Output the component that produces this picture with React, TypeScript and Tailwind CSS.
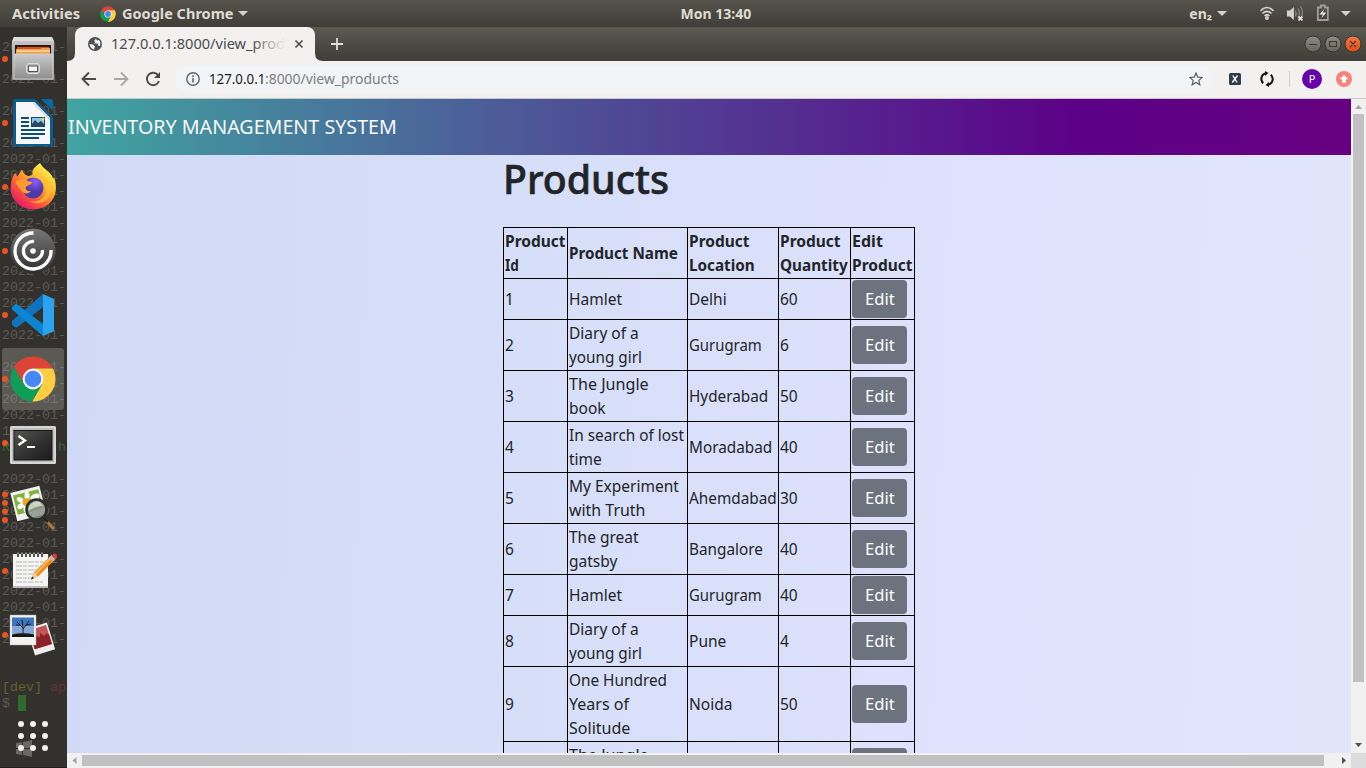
import { useLayoutEffect, useRef, useState } from "react";
import type { ReactNode } from "react";

/* Text set to an exact advance width. */
function Fit({ w, children, className = "" }: { w: number; children: ReactNode; className?: string }) {
  const ref = useRef<HTMLSpanElement>(null);
  const [scale, setScale] = useState(1);
  useLayoutEffect(() => {
    if (ref.current) setScale(w / ref.current.offsetWidth);
  }, [w]);
  return (
    <span className={"block whitespace-nowrap " + className} style={{ width: w }}>
      <span ref={ref} className="inline-block origin-left" style={{ transform: `scaleX(${scale})` }}>
        {children}
      </span>
    </span>
  );
}

type Line = [string, number];
type Row = { id: string; name: Line[]; place: Line; qty: string };

const rows: Row[] = [
  { id: "1", name: [["Hamlet", 53]], place: ["Delhi", 38], qty: "60" },
  { id: "2", name: [["Diary of a", 70], ["young girl", 73]], place: ["Gurugram", 73], qty: "6" },
  { id: "3", name: [["The Jungle", 80], ["book", 37]], place: ["Hyderabad", 79], qty: "50" },
  { id: "4", name: [["In search of lost", 115], ["time", 33]], place: ["Moradabad", 83], qty: "40" },
  { id: "5", name: [["My Experiment", 110], ["with Truth", 76]], place: ["Ahemdabad", 88], qty: "30" },
  { id: "6", name: [["The great", 70], ["gatsby", 48]], place: ["Bangalore", 74], qty: "40" },
  { id: "7", name: [["Hamlet", 53]], place: ["Gurugram", 73], qty: "40" },
  { id: "8", name: [["Diary of a", 70], ["young girl", 73]], place: ["Pune", 37], qty: "4" },
  { id: "9", name: [["One Hundred", 98], ["Years of", 60], ["Solitude", 61]], place: ["Noida", 43], qty: "50" },
  { id: "10", name: [["The Jungle", 80], ["book", 37]], place: ["Delhi", 38], qty: "30" },
];

const heads: Line[][] = [
  [["Product", 61], ["Id", 14]],
  [["Product Name", 109]],
  [["Product", 61], ["Location", 66]],
  [["Product", 61], ["Quantity", 68]],
  [["Edit", 31], ["Product", 61]],
];

const logLines = [
  47, 79, 111, 143, 159, 175, 191, 207, 223, 239, 271, 287, 303, 335, 367, 383, 399, 415, 479, 495, 511, 527, 543, 559,
  575, 591, 607, 623, 639,
];

function ChromeMark() {
  return (
    <g>
      <path d="M-19.04-11.98L-9.09 5.25L0-10.5H19.9A22.5 22.5 0 0 0-19.04-11.98Z" fill="#dd4337" />
      <path d="M19.9-10.5H0L9.09 5.25L-.86 22.48A22.5 22.5 0 0 0 19.9-10.5Z" fill="#ffcd41" />
      <path d="M-.86 22.48L9.09 5.25L-9.09 5.25L-19.04-11.98A22.5 22.5 0 0 0-.86 22.48Z" fill="#109d58" />
      <circle r="10.4" fill="#f3f3f3" />
      <circle r="8.3" fill="#4587f4" />
    </g>
  );
}

const dockIcons: ReactNode[] = [
  <g key="files">
    <defs>
      <linearGradient id="cab" x2="0" y2="1">
        <stop stopColor="#c9c9c9" />
        <stop offset="1" stopColor="#8d8d8d" />
      </linearGradient>
    </defs>
    <path d="M14 10H52L54 14V53H12V14Z" fill="url(#cab)" />
    <path d="M14 10H52L53.500 14H12.500Z" fill="#dedede" />
    <rect x="15" y="18" width="36" height="9" fill="#2b1a12" />
    <path d="M17 20H49V27H17Z" fill="#d8521c" />
    <path d="M16 22H40L42 21H50V27H16Z" fill="#f0a04a" />
    <path d="M17 24H50" stroke="#fff1d8" strokeWidth="1" />
    <rect x="14" y="27" width="39" height="25" fill="url(#cab)" stroke="#d5d5d5" strokeWidth=".8" />
    <rect x="26.500" y="36.500" width="13" height="10" rx="2.500" fill="#b9b9b9" stroke="#dcdcdc" />
    <rect x="28.500" y="39" width="9" height="5.500" fill="#f5f5f5" stroke="#555" />
  </g>,
  <g key="writer">
    <path d="M15 8H35L53 26V53Q53 55.500 50.500 55.500H15.500Q13 55.500 13 53V10Q13 8 15 8Z" fill="#0c5c92" />
    <path d="M41 8H51.500Q53 8 53 10V20Z" fill="#0369a3" />
    <path d="M16 11H34.500L50 27V53H16Z" fill="#f7f7f7" />
    <path d="M34.500 11L50 27V30L32 11Z" fill="#d5d5d5" />
    <path d="M21 27H29M21 31H29M21 35H29M21 39H45M21 43H45M21 47H39" stroke="#0c4c78" strokeWidth="1.800" />
    <rect x="31.500" y="26.500" width="13" height="9" fill="#8ec5e8" stroke="#0c4c78" />
    <path d="M32 35V33L35 29L38 32L41 30L44 33V35Z" fill="#27495c" />
    <circle cx="43" cy="28" r="1.500" fill="#f4d34e" />
  </g>,
  <g key="firefox">
    <defs>
      <linearGradient id="fox" x1=".85" y1=".1" x2=".2" y2=".95">
        <stop stopColor="#fff44f" />
        <stop offset=".35" stopColor="#ffb52b" />
        <stop offset=".65" stopColor="#ff5e36" />
        <stop offset="1" stopColor="#e5156c" />
      </linearGradient>
      <radialGradient id="globe" cx=".6" cy=".2">
        <stop stopColor="#9059ff" />
        <stop offset="1" stopColor="#4b3aa8" />
      </radialGradient>
    </defs>
    <path
      d="M40 8C43 14 50 16 53 23C54 25 54 23 54 22C60 38 52 54 33 54.500C18 54 9 42 11 30C11 24 14 20 15 18C16 19 17 21 17 22L22 14.500C23 18 25 20 28 21C31 21 33 20 32.500 18C32 14 36 11 40 8Z"
      fill="url(#fox)"
    />
    <circle cx="33" cy="33" r="10.500" fill="url(#globe)" />
    <path d="M15 27C19 23 25 24 28 26L32 27C32 30 28 30 27 31C24 33 27 37 31 36C28 40 23 39 20 34Z" fill="#ff9a30" />
    <path d="M38 22C43 24 46 28 46 34C46 43 39 48 30 46C43 53 54 42 50 30C48 24 43 21 38 22Z" fill="#ffbd36" opacity=".75" />
  </g>,
  <g key="spiral">
    <defs>
      <linearGradient id="disc" x2="0" y2="1">
        <stop stopColor="#777" />
        <stop offset="1" stopColor="#2d2d2d" />
      </linearGradient>
    </defs>
    <circle cx="33" cy="32" r="22.500" fill="url(#disc)" />
    <circle cx="33" cy="32" r="2.800" fill="#fff" />
    <path d="M33.500 14A18 18 0 1 0 51 31" fill="none" stroke="#fff" strokeWidth="3.300" />
    <path d="M34 22.500A9.500 9.500 0 1 0 42.400 31" fill="none" stroke="#fff" strokeWidth="3.300" />
  </g>,
  <g key="code">
    <path d="M12 38L43 11V24L17 44.500Q15 45 12 41.500Q11.500 40 12 38Z" fill="#0f74bd" />
    <path d="M12 24.500L16 20.500L43 41V53L12.500 27Q11.500 26 12 24.500Z" fill="#0b86d3" />
    <path d="M43 11L54 16V48L43 53Z" fill="#2ba3ef" />
  </g>,
  <g key="chrome" transform="translate(33 32)">
    <ChromeMark />
  </g>,
  <g key="terminal">
    <defs>
      <linearGradient id="scr" x2="1" y2="1">
        <stop stopColor="#555753" />
        <stop offset=".5" stopColor="#343434" />
        <stop offset="1" stopColor="#1b1b1b" />
      </linearGradient>
    </defs>
    <rect x="10" y="15" width="46" height="38" rx="1.500" fill="#d6d6d6" />
    <rect x="12" y="17" width="42" height="34" fill="#bcbcbc" />
    <rect x="14" y="19.500" width="38" height="29.500" fill="url(#scr)" stroke="#161616" />
    <path d="M18.500 25L25 29.500L18.500 34" fill="none" stroke="#fff" strokeWidth="2.300" />
    <path d="M27 36H35" stroke="#fff" strokeWidth="2" />
  </g>,
  <g key="viewer">
    <g transform="rotate(-14 28 27)">
      <rect x="13" y="14" width="30" height="29" fill="#f1f1ef" />
      <rect x="15" y="17" width="26" height="20" fill="#82b33a" />
    </g>
    <g fill="#fff">
      <ellipse cx="27" cy="21" rx="2.500" ry="4.500" />
      <ellipse cx="20.500" cy="25" rx="4" ry="2.500" transform="rotate(25 20.500 25)" />
      <ellipse cx="21" cy="31" rx="4" ry="2.500" transform="rotate(-30 21 31)" />
      <ellipse cx="26" cy="34" rx="2.500" ry="4" />
      <ellipse cx="35" cy="22" rx="5" ry="3" transform="rotate(-25 35 22)" />
      <ellipse cx="37" cy="27" rx="4" ry="3" />
    </g>
    <circle cx="26.500" cy="27" r="4" fill="#e4a828" />
    <path d="M46.500 46L53 53" stroke="#a97836" strokeWidth="3.200" strokeLinecap="round" />
    <path d="M44 43L48 47" stroke="#222" strokeWidth="2.500" />
    <circle cx="36.500" cy="34.500" r="10" fill="#8b9088" fillOpacity=".85" stroke="#292e28" strokeWidth="2.600" />
    <path d="M28.500 36A8.500 8.500 0 0 1 40 27L43 31Q35 31 28.500 36Z" fill="#fff" opacity=".55" />
  </g>,
  <g key="notes">
    <rect x="13" y="15" width="35" height="34" fill="#f4f4f2" />
    <path d="M13 48H48" stroke="#bbb" strokeWidth="2" />
    <path d="M16 23H44M16 27H42M16 31H38M16 35H35M16 39H32M16 43H43" stroke="#a9a9a9" strokeWidth=".8" strokeDasharray="6 1 4 1" />
    <path d="M18 14V18M22 14V18M26 14V18M30 14V18M34 14V18M38 14V18M42 14V18" stroke="#4c4c4c" strokeWidth="2" />
    <path d="M18 13.500V15M22 13.500V15M26 13.500V15M30 13.500V15M34 13.500V15M38 13.500V15M42 13.500V15" stroke="#ddd" strokeWidth="1" />
    <path d="M31 40.500L34 33.500L50 17.500L54 21.500L38 37.500Z" fill="#f28d1c" />
    <path d="M35 35.500L51 18.500" stroke="#ffc56e" strokeWidth="1.500" />
    <path d="M31 40.500L34 33.500L38 37.500Z" fill="#ead0a4" />
    <path d="M31 40.500L32.200 37.500L34 39.200Z" fill="#222" />
    <path d="M49 18.500L52 15.500L56 19.500L53 22.500Z" fill="#b8bec4" />
    <path d="M51.500 16.500L54 14.500Q58 15 57 18.500L55 20.500Z" fill="#dc3e34" />
  </g>,
  <g key="photos">
    <g transform="rotate(-17 41 36)">
      <rect x="30.500" y="22" width="21" height="28" fill="#eee" />
      <rect x="32" y="24" width="18" height="20" fill="#c0565a" />
      <path d="M32 34L35 35L37 31L40 34L42 30L45 34L48 32L50 34V44H32Z" fill="#8d1f27" />
    </g>
    <rect x="10" y="12" width="26" height="30" fill="#f2f2f2" stroke="#aaa" strokeWidth=".5" />
    <rect x="12" y="14.500" width="22" height="19" fill="#3d74bd" />
    <path d="M12 23H34V33H12Z" fill="#84a9d6" />
    <path d="M12 31.500Q23 29 34 31.500V34H12Z" fill="#171717" />
    <path d="M23 32V25L17 19M23 26L29 18M20 22H16M26 22L31 21M23 25L22 17" stroke="#202020" strokeWidth="1" fill="none" />
  </g>,
];

const dotRows: number[][] = [[32], [32], [32], [32], [32], [32], [32], [19.5, 28, 36.500, 45], [32], [32]];

function Dock() {
  return (
    <aside className="relative h-[741px] w-[67px] shrink-0 overflow-hidden bg-[#33312d]">
      <svg className="absolute left-0 top-0" width="67" height="741" viewBox="0 27 67 741" fontFamily="Liberation Mono, monospace" fontSize="13.33">
        <g fill="#5c5953">
          {logLines.map((y) => (
            <text key={y} x="2" y={y + 4}>2022-01-</text>
          ))}
          <text x="2" y="435">1</text>
          <text x="2" y="707">$</text>
        </g>
        <text x="2" y="451" fill="#38622f">R</text>
        <text x="58" y="451" fill="#38622f">h</text>
        <text x="2" y="691" fill="#65602f">[dev]</text>
        <text x="50" y="691" fill="#673331">ap</text>
        <rect x="18" y="695" width="8" height="16" fill="#30692d" />
        <path d="M16 743L22 742V748H16ZM23 742L32 740V748H23ZM16 749H22V755L16 754ZM23 749H32V757L23 755Z" fill="#696863" />
        <path d="M0 767.500H67" stroke="#2a1826" />
      </svg>
      <div className="relative flex flex-col">
        {dockIcons.map((icon, i) => (
          <svg key={i} width="67" height="64" viewBox="0 0 67 64">
            {i === 5 && <rect x="2" y="1" width="62" height="62" rx="3" fill="#a3a19c" fillOpacity=".36" />}
            {dotRows[i].map((y) => (
              <circle key={y} cx="5" cy={y} r="3" fill="#e95420" />
            ))}
            {icon}
          </svg>
        ))}
        <svg width="67" height="101" viewBox="0 667 67 101" fill="#f2f1ef">
          {[724, 736, 748].map((y) => [21, 33, 45].map((x) => <circle key={`${x}-${y}`} cx={x} cy={y} r="3" />))}
        </svg>
      </div>
    </aside>
  );
}

function TopBar() {
  return (
    <header className="flex h-[27px] shrink-0 items-center bg-linear-to-b from-[#57544c] to-[#3e3d38] text-[14px] font-bold leading-[27px] text-[#dfdbd2]">
      <Fit w={68} className="ml-[12px]">Activities</Fit>
      <svg className="ml-[20px]" width="16" height="16" viewBox="-23 -23 46 46"><ChromeMark /></svg>
      <Fit w={111} className="ml-[6px]">Google Chrome</Fit>
      <svg className="ml-[5px]" width="10" height="5" viewBox="0 0 10 5"><path d="M0 0H10L5 5Z" fill="#d5d1c9" /></svg>
      <Fit w={71} className="ml-[433px]">Mon 13:40</Fit>
      <Fit w={23} className="ml-[438px]">en₂</Fit>
      <svg className="ml-[5px]" width="10" height="5" viewBox="0 0 10 5"><path d="M0 0H10L5 5Z" fill="#d5d1c9" /></svg>
      <svg className="ml-[32px]" width="107" height="27" viewBox="1259 0 107 27" fill="none">
        <g stroke="#d5d1c9" strokeWidth="1.700">
          <path d="M1260.500 11Q1267 4 1273.500 11" />
          <path d="M1262.500 13.500Q1267 9 1271.500 13.500" />
          <path d="M1264.500 16Q1267 13.500 1269.500 16" />
        </g>
        <circle cx="1267" cy="18" r="2" fill="#d5d1c9" />
        <path d="M1287 10.500H1290L1294 7V20L1290 16.500H1287Z" fill="#d5d1c9" />
        <path d="M1295.500 10.500Q1297 13.500 1295.500 16.500M1298 8.500Q1301 13 1298 17.500M1300.500 6.500Q1303.500 11 1302 16" stroke="#8c8981" strokeWidth="1.200" />
        <path d="M1298.500 16.500L1302.500 20.500M1302.500 16.500L1298.500 20.500" stroke="#e6e3dc" strokeWidth="1.800" />
        <path d="M1318 7.500H1321V5.500H1325V7.500H1328V20H1318Z" stroke="#a19e95" strokeWidth="1.800" />
        <path d="M1324.500 9L1319.500 14.500H1323L1321.500 18.500L1326.500 12.500H1323Z" fill="#e6e3dc" />
        <path d="M1341 11H1351L1346 16Z" fill="#d5d1c9" />
      </svg>
    </header>
  );
}

function TabStrip() {
  return (
    <div className="flex h-[34px] shrink-0 bg-linear-to-b from-[#595a50] to-[#3f3e39]">
      <svg className="shrink-0 self-end" width="8" height="8"><path d="M8 0V8H0Q8 8 8 0Z" fill="#f2f1f0" /></svg>
      <div className="flex w-[240px] shrink-0 items-center rounded-t-[8px] bg-[#f2f1f0] text-[14px] text-[#4b4b4d]">
        <svg className="ml-[13px] shrink-0" width="14" height="14" viewBox="0 0 14 14">
          <circle cx="7" cy="7" r="7" fill="#4d5156" />
          <path d="M8 1.500L6 4L7.500 5L6 6.500H9.500L10.500 9L12 9Q13 5 11 3L9 3.500ZM1.500 7L5 7.500L7 9.500L6 12.500Q2 11.500 1.500 7Z" fill="#f2f1f0" />
        </svg>
        <div className="relative mb-[2px] ml-[9px] w-[174px] overflow-hidden">
          <Fit w={174}>127.0.0.1:8000/view_prod</Fit>
          <span className="absolute inset-y-0 right-0 w-[34px] bg-linear-to-r from-transparent to-[#f2f1f0]" />
        </div>
        <svg className="ml-[9px]" width="10" height="10" viewBox="0 0 10 10"><path d="M1.500 1.500L8.500 8.500M8.500 1.500L1.500 8.500" stroke="#4c4c4c" strokeWidth="1.600" /></svg>
      </div>
      <svg className="shrink-0 self-end" width="8" height="8"><path d="M0 0V8H8Q0 8 0 0Z" fill="#f2f1f0" /></svg>
      <svg className="ml-[8px] self-center" width="12" height="12"><path d="M6 0V12M0 6H12" stroke="#deddd8" strokeWidth="1.800" /></svg>
      <svg className="ml-auto" width="66" height="34" viewBox="1300 27 66 34">
        <defs>
          <linearGradient id="wb" x2="0" y2="1"><stop stopColor="#8e8d84" /><stop offset="1" stopColor="#66655d" /></linearGradient>
          <linearGradient id="wc" x2="0" y2="1"><stop stopColor="#f7784e" /><stop offset="1" stopColor="#e44b0b" /></linearGradient>
        </defs>
        <circle cx="1313" cy="44" r="8" fill="url(#wb)" stroke="#353530" />
        <circle cx="1333" cy="44" r="8" fill="url(#wb)" stroke="#353530" />
        <circle cx="1353" cy="44" r="8" fill="url(#wc)" stroke="#353530" />
        <path d="M1309 44.500H1317M1329.500 41.500H1336.500V46.500H1329.500ZM1350 41L1356 47M1356 41L1350 47" fill="none" stroke="#3d3a32" strokeWidth="1.200" />
      </svg>
    </div>
  );
}

function Toolbar() {
  return (
    <div className="flex h-[38px] shrink-0 items-start border-b border-[#c9c8c7] bg-[#f2f1f0]">
      <svg className="shrink-0" width="108" height="37" viewBox="67 61 108 37" fill="none" strokeWidth="1.900">
        <path d="M96 79H83M89 72.500L82.500 79L89 85.500" stroke="#4b4b4b" />
        <path d="M114 79H127M121 72.500L127.500 79L121 85.500" stroke="#aaa9a8" />
        <path d="M158.300 75.500A6.200 6.200 0 1 0 159 81" stroke="#4b4b4b" />
        <path d="M160 72V78H154Z" fill="#4b4b4b" />
      </svg>
      <div className="mt-[4px] flex h-[28px] w-[1038px] shrink-0 items-center rounded-full bg-[#f1f3f4] text-[14px] leading-[28px]">
        <svg className="ml-[11px]" width="14" height="14" viewBox="0 0 14 14" fill="none" stroke="#5f6368">
          <circle cx="7" cy="7" r="6.200" strokeWidth="1.400" />
          <path d="M7 6V10.500M7 3.300V4.900" strokeWidth="1.600" />
        </svg>
        <Fit w={56} className="ml-[9px] text-[#202124]">127.0.0.1</Fit>
        <Fit w={134} className="text-[#7c8085]">:8000/view_products</Fit>
        <svg className="ml-auto mr-[10px]" width="14" height="14" viewBox="0 0 14 14">
          <path d="M7 1L8.700 5.100L13.200 5.500L9.800 8.400L10.800 12.800L7 10.500L3.200 12.800L4.200 8.400L.8 5.500L5.300 5.100Z" fill="none" stroke="#5c6065" strokeWidth="1.200" />
        </svg>
      </div>
      <svg className="shrink-0" width="153" height="37" viewBox="1213 61 153 37">
        <rect x="1229" y="73" width="12" height="12" rx="1.500" fill="#2d3e4e" />
        <path d="M1232.800 75.500L1237.100 82.500M1237.500 75.500L1232.300 82.500" stroke="#fff" strokeWidth="1.400" />
        <g fill="none" stroke="#111" strokeWidth="2">
          <path d="M1265 73.300A6 6 0 0 0 1263.200 83.200" />
          <path d="M1269 84.700A6 6 0 0 0 1270.800 74.800" />
        </g>
        <path d="M1265 71L1268.500 73L1265 76ZM1269 82L1265.500 85L1269 87Z" fill="#111" />
        <path d="M1289.500 71V87" stroke="#ceced0" />
        <circle cx="1312" cy="79" r="10" fill="#6502a9" />
        <text x="1312" y="83" textAnchor="middle" fill="#fff" fontSize="11" fontFamily="Noto Sans, sans-serif">P</text>
        <circle cx="1344" cy="79" r="8" fill="#f98378" />
        <path d="M1344 74.800L1348.200 79.200H1346V82.800H1342V79.200H1339.800Z" fill="#fff" />
      </svg>
    </div>
  );
}

function Products() {
  return (
    <main className="h-[654px] w-[1284px] overflow-hidden bg-[linear-gradient(92deg,#d0daf4_0%,#d8dff8_40%,#dde1fb_65%,#e1e5fc_100%)] text-[15.5px] leading-6 text-[#212529]">
      <nav className="flex h-14 items-center bg-[linear-gradient(90deg,#40a5a0_0%,#4b6199_31%,#5c0088_79%,#670080_100%)] text-[19.5px] text-[#f8f9fa]">
        <Fit w={329} className="ml-px">INVENTORY MANAGEMENT SYSTEM</Fit>
      </nav>
      <div className="ml-[436px]">
        <h1 className="mb-6 text-[39px] font-medium leading-[48px] [-webkit-text-stroke:0.6px_#212529]"><Fit w={166}>Products</Fit></h1>
        <table className="w-[412px] table-fixed border-collapse text-left">
          <colgroup>
            <col className="w-[64px]" /><col className="w-[120px]" /><col className="w-[91px]" /><col className="w-[72px]" /><col className="w-[64px]" />
          </colgroup>
          <thead>
            <tr>
              {heads.map((h, i) => (
                <th key={i} className="border border-black p-px font-bold">
                  {h.map(([t, w]) => <Fit key={t} w={w}>{t}</Fit>)}
                </th>
              ))}
            </tr>
          </thead>
          <tbody>
            {rows.map((r) => (
              <tr key={r.id}>
                <td className="border border-black p-px"><Fit w={9 * r.id.length}>{r.id}</Fit></td>
                <td className="border border-black p-px">{r.name.map(([t, w]) => <Fit key={t} w={w}>{t}</Fit>)}</td>
                <td className="border border-black p-px"><Fit w={r.place[1]}>{r.place[0]}</Fit></td>
                <td className="border border-black p-px"><Fit w={9 * r.qty.length}>{r.qty}</Fit></td>
                <td className="border border-black p-px">
                  <button className="flex h-[38px] w-[55px] items-center rounded-[4px] bg-[#6c737e] pl-3 text-white">
                    <Fit w={30}>Edit</Fit>
                  </button>
                </td>
              </tr>
            ))}
          </tbody>
        </table>
      </div>
    </main>
  );
}

export default function App() {
  return (
    <div className="flex h-[768px] w-[1366px] flex-col overflow-hidden font-['Noto_Sans',sans-serif]">
      <TopBar />
      <div className="flex">
        <Dock />
        <div className="flex w-[1299px] flex-col">
          <TabStrip />
          <Toolbar />
          <div className="flex">
            <Products />
            <div className="flex h-[654px] w-[15px] flex-col items-center bg-[#f1f1f1]">
              <svg width="15" height="15"><path d="M4 10H11L7.500 6Z" fill="#a3a3a3" /></svg>
              <div className="h-[568px] w-[11px] bg-[#c1c1c1]" />
              <svg className="mt-auto" width="15" height="15"><path d="M4 5H11L7.500 9Z" fill="#505050" /></svg>
            </div>
          </div>
          <div className="flex h-[15px] items-center bg-[#f1f1f1]">
            <svg width="15" height="15"><path d="M9.500 4V11L5.500 7.500Z" fill="#a3a3a3" /></svg>
            <div className="h-[11px] w-[1242px] bg-[#c1c1c1]" />
            <svg className="ml-auto" width="15" height="15"><path d="M6 4V11L10 7.500Z" fill="#505050" /></svg>
            <div className="h-[15px] w-[15px] bg-[#dcdcdc]" />
          </div>
        </div>
      </div>
    </div>
  );
}
